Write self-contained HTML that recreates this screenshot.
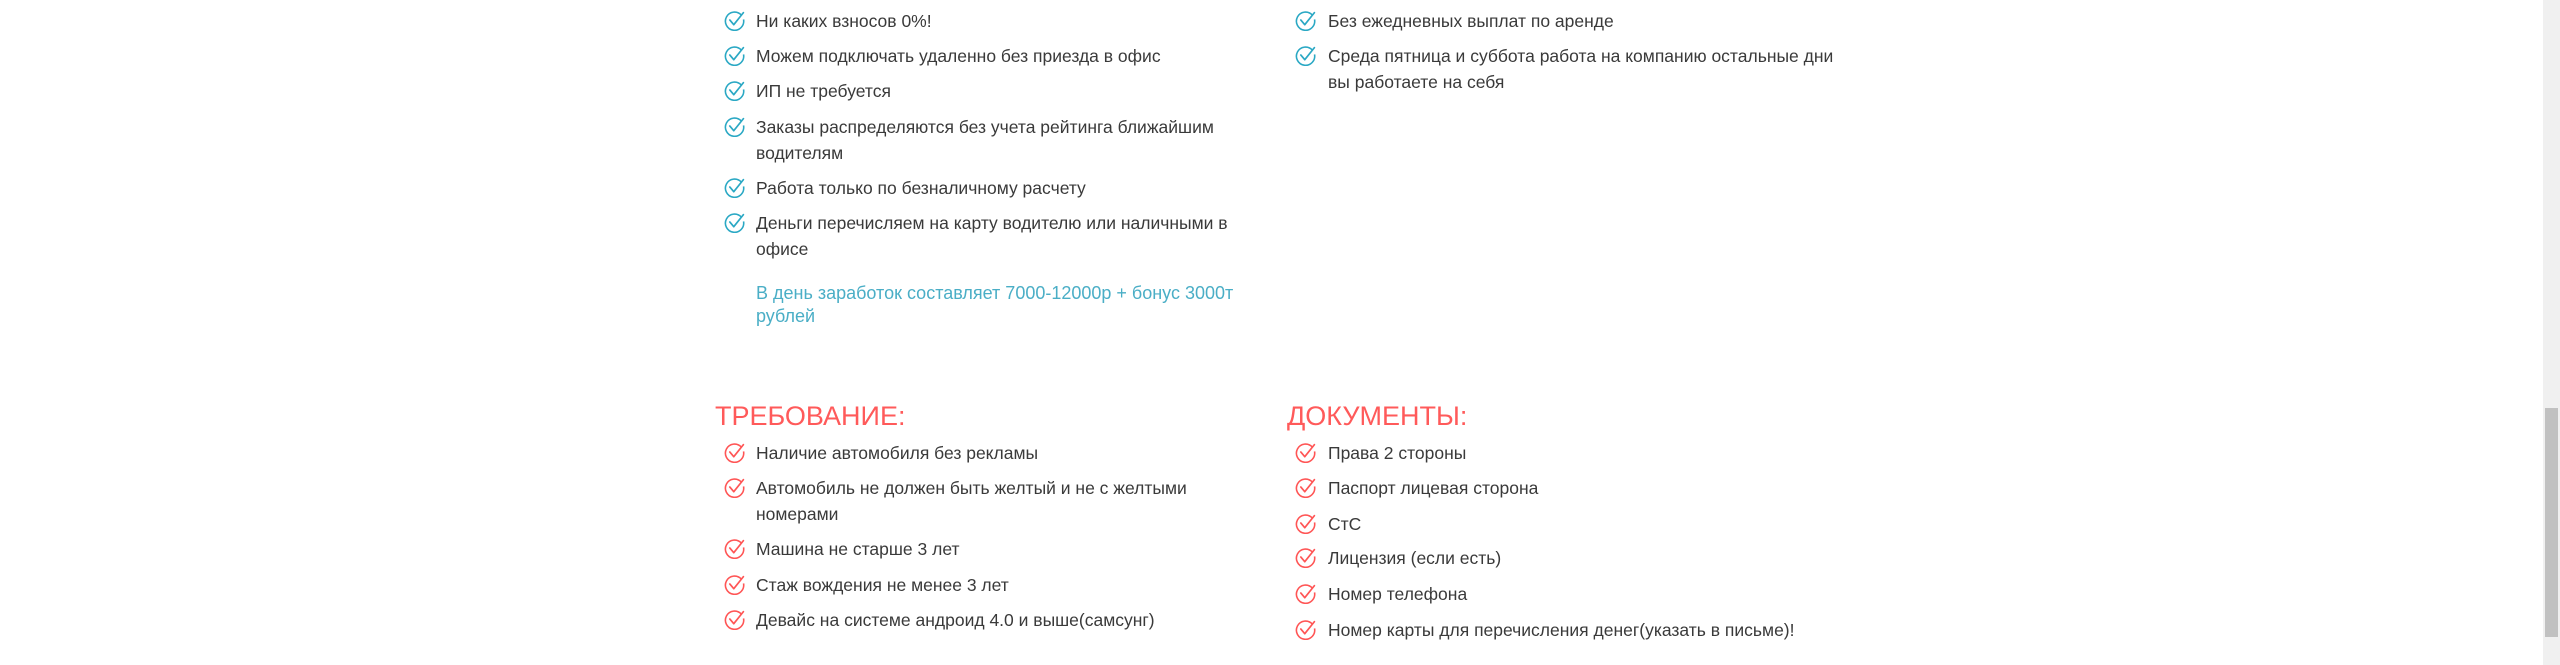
<!DOCTYPE html>
<html><head><meta charset="utf-8"><style>
body{margin:0;width:2560px;height:665px;background:#fff;position:relative;overflow:hidden;font-family:"Liberation Sans","Noto Sans CJK SC",sans-serif;}
.t{position:absolute;font-size:17.5px;color:#3a3a3a;line-height:26px;white-space:nowrap;}
.b{color:#4aaec6;font-size:18px;}
.h{position:absolute;font-size:27px;color:#ff5a5a;line-height:30px;}
svg{position:absolute;width:21px;height:21px;}
.sb{position:absolute;left:2543px;top:0;width:17px;height:665px;background:#f0f0f0;}
.th{position:absolute;left:2545px;top:408px;width:13px;height:229px;background:#c1c1c1;}
</style></head><body>
<svg width="0" height="0" style="position:absolute"><defs>
<symbol id="c" viewBox="0 0 20 20"><path d="M16.5 4.8A8.7 8.7 0 1 0 18.6 9" fill="none" stroke="currentColor" stroke-width="1.5"/><path d="M5.5 9.5L9.3 14L18.5 2.5" fill="none" stroke="currentColor" stroke-width="1.6" stroke-linecap="round" stroke-linejoin="round"/></symbol>
</defs></svg>

<svg style="left:724px;top:10px;color:#2aa8c4"><use href="#c"/></svg><div class="t" style="left:756px;top:8px">Ни каких взносов 0%!</div>
<svg style="left:724px;top:45px;color:#2aa8c4"><use href="#c"/></svg><div class="t" style="left:756px;top:43px">Можем подключать удаленно без приезда в офис</div>
<svg style="left:724px;top:80px;color:#2aa8c4"><use href="#c"/></svg><div class="t" style="left:756px;top:78px">ИП не требуется</div>
<svg style="left:724px;top:116px;color:#2aa8c4"><use href="#c"/></svg><div class="t" style="left:756px;top:114px">Заказы распределяются без учета рейтинга ближайшим<br>водителям</div>
<svg style="left:724px;top:177px;color:#2aa8c4"><use href="#c"/></svg><div class="t" style="left:756px;top:175px">Работа только по безналичному расчету</div>
<svg style="left:724px;top:212px;color:#2aa8c4"><use href="#c"/></svg><div class="t" style="left:756px;top:210px">Деньги перечисляем на карту водителю или наличными в<br>офисе</div>
<div class="t b" style="left:756px;top:282px;line-height:23px">В день заработок составляет 7000-12000р + бонус 3000т<br>рублей</div>

<svg style="left:1295px;top:10px;color:#2aa8c4"><use href="#c"/></svg><div class="t" style="left:1328px;top:8px">Без ежедневных выплат по аренде</div>
<svg style="left:1295px;top:45px;color:#2aa8c4"><use href="#c"/></svg><div class="t" style="left:1328px;top:43px">Среда пятница и суббота работа на компанию остальные дни<br>вы работаете на себя</div>

<div class="h" style="left:715px;top:401px">ТРЕБОВАНИЕ:</div>
<svg style="left:724px;top:442px;color:#f55"><use href="#c"/></svg><div class="t" style="left:756px;top:440px">Наличие автомобиля без рекламы</div>
<svg style="left:724px;top:477px;color:#f55"><use href="#c"/></svg><div class="t" style="left:756px;top:475px">Автомобиль не должен быть желтый и не с желтыми<br>номерами</div>
<svg style="left:724px;top:538px;color:#f55"><use href="#c"/></svg><div class="t" style="left:756px;top:536px">Машина не старше 3 лет</div>
<svg style="left:724px;top:574px;color:#f55"><use href="#c"/></svg><div class="t" style="left:756px;top:572px">Стаж вождения не менее 3 лет</div>
<svg style="left:724px;top:609px;color:#f55"><use href="#c"/></svg><div class="t" style="left:756px;top:607px">Девайс на системе андроид 4.0 и выше(самсунг)</div>

<div class="h" style="left:1287px;top:401px">ДОКУМЕНТЫ:</div>
<svg style="left:1295px;top:442px;color:#f55"><use href="#c"/></svg><div class="t" style="left:1328px;top:440px">Права 2 стороны</div>
<svg style="left:1295px;top:477px;color:#f55"><use href="#c"/></svg><div class="t" style="left:1328px;top:475px">Паспорт лицевая сторона</div>
<svg style="left:1295px;top:513px;color:#f55"><use href="#c"/></svg><div class="t" style="left:1328px;top:511px">СтС</div>
<svg style="left:1295px;top:547px;color:#f55"><use href="#c"/></svg><div class="t" style="left:1328px;top:545px">Лицензия (если есть)</div>
<svg style="left:1295px;top:583px;color:#f55"><use href="#c"/></svg><div class="t" style="left:1328px;top:581px">Номер телефона</div>
<svg style="left:1295px;top:619px;color:#f55"><use href="#c"/></svg><div class="t" style="left:1328px;top:617px">Номер карты для перечисления денег(указать в письме)!</div>

<div class="sb"></div><div class="th"></div>
</body></html>
